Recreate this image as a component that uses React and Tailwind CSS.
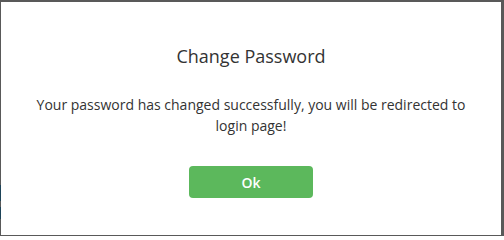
export default function App() {
  return (
    <div
      className="flex h-[236px] w-[504px] bg-[#595959] pt-[2px] pb-[1px] pr-[3px]"
      style={{ fontFamily: '"Open Sans", sans-serif' }}
    >
      {/* page behind the overlay peeks out on the left edge */}
      <div className="flex w-[1px] flex-col">
        <div className="h-[183px]" />
        <div className="h-[16px] bg-[#1d4358]" />
        <div className="h-[6px]" />
        <div className="h-[12px] bg-[#1d4358]" />
      </div>

      <div className="flex flex-1 flex-col items-center bg-white pt-[42px]">
        <h2 className="text-[18px] leading-[25px] text-[#333333]">Change Password</h2>
        <p className="mt-[25px] px-6 text-center text-[14px] leading-[21px] text-[#333333]">
          Your password has changed successfully, you will be redirected to login page!
        </p>
        <button
          type="button"
          className="mt-[30px] h-[32px] w-[124px] rounded-[4px] bg-[#5cb85c] text-[14px] font-semibold text-white"
        >
          Ok
        </button>
      </div>
    </div>
  );
}
